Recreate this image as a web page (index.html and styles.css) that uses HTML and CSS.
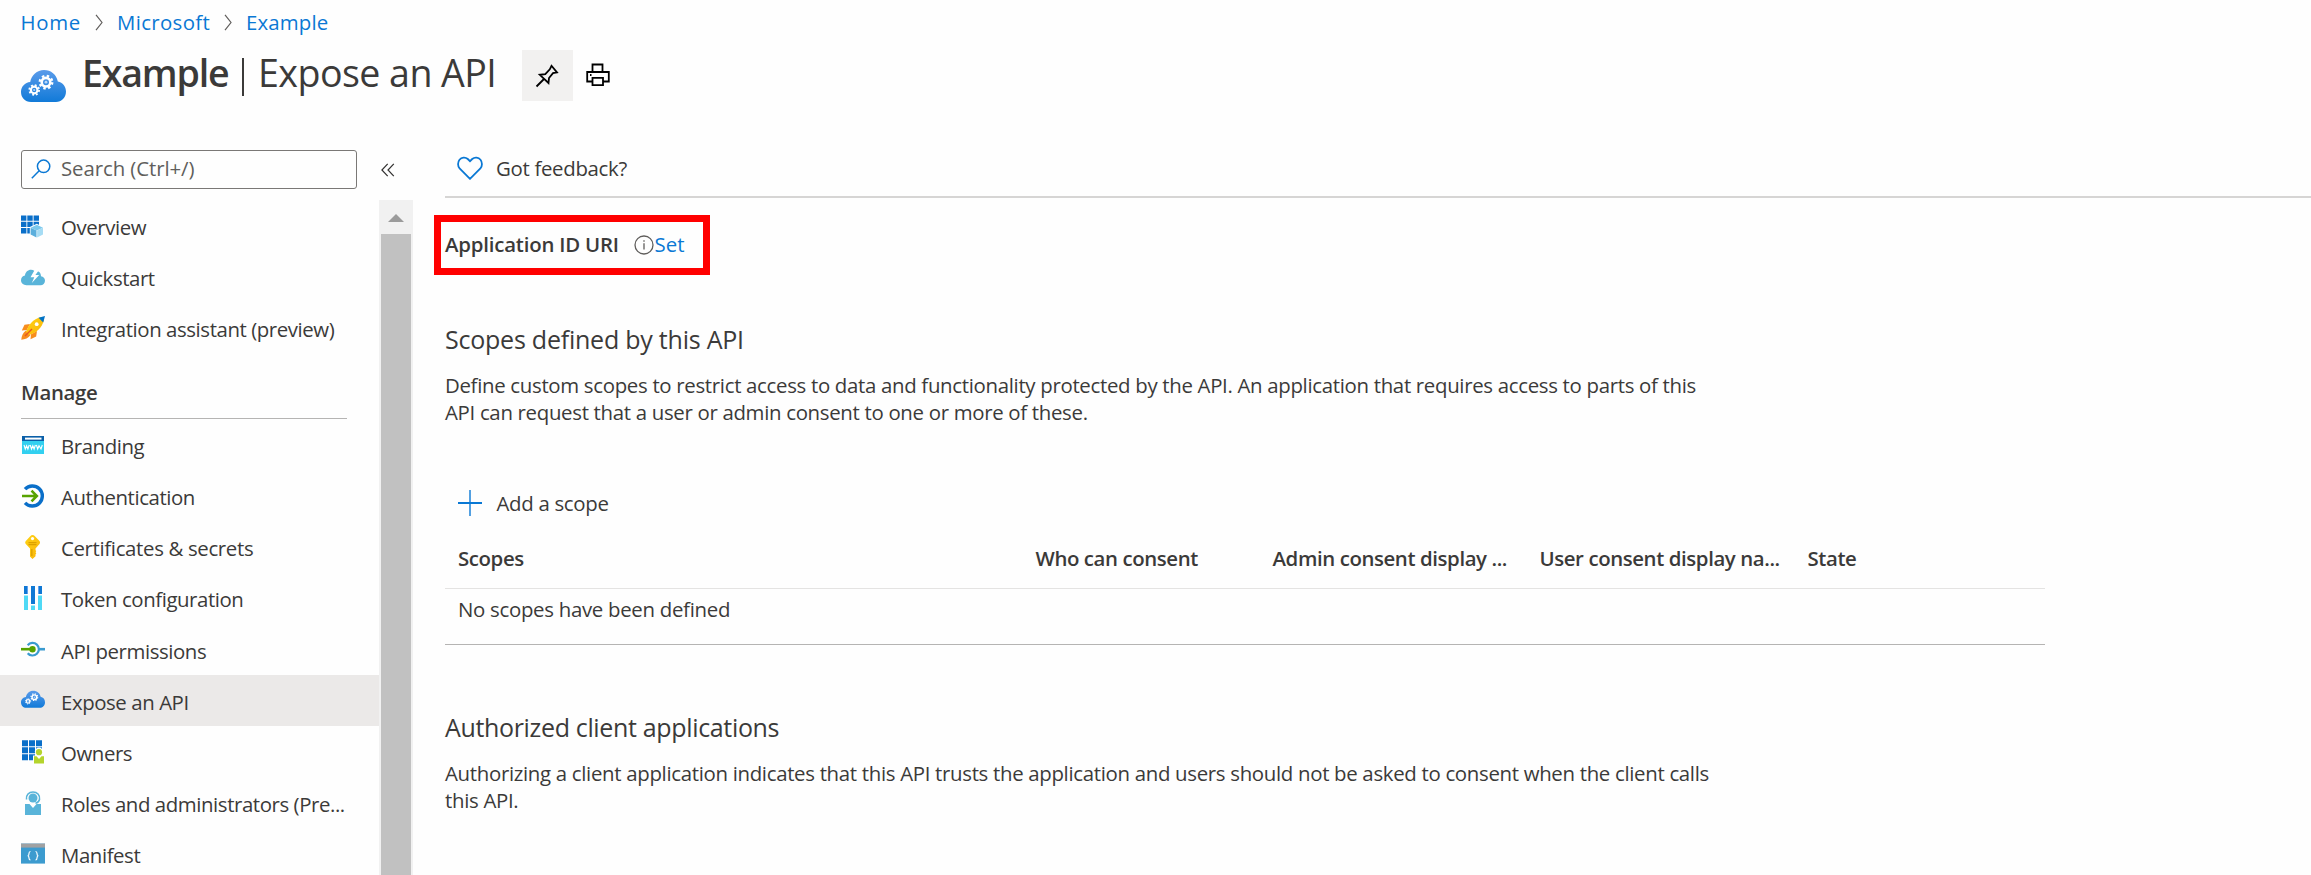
FILE: index.html
```
<!DOCTYPE html>
<html lang="en">
<head>
<meta charset="utf-8">
<title>Example | Expose an API</title>
<link rel="stylesheet" href="styles.css">
</head>
<body>
<svg class="defs" width="0" height="0" aria-hidden="true">
  <defs>
    <linearGradient id="sky" x1="0" y1="0" x2="0" y2="1"><stop offset="0" stop-color="#5a9bea"/><stop offset="1" stop-color="#117ad8"/></linearGradient>
    <linearGradient id="gold" x1="0" y1="0" x2="1" y2="1"><stop offset="0" stop-color="#ffd314"/><stop offset="1" stop-color="#f9b40a"/></linearGradient>
    <symbol id="api-cloud" viewBox="0 0 45 32">
      <path fill="url(#sky)" d="M10 32C4 32 0 27.500 0 22c0-5.500 4-9.500 9.200-10C10.500 5 16 0 23 0c7 0 12.500 4.500 13.800 11.500C41.800 12.500 45 16.500 45 21.500 45 27.500 40.500 32 35 32Z"/>
      <g fill="none" stroke="#fff">
        <circle cx="25" cy="12.200" r="4.300" stroke-width="2.600"/>
        <circle cx="25" cy="12.200" r="6.200" stroke-width="2.400" stroke-dasharray="2.435 2.435"/>
        <circle cx="13.200" cy="20" r="3.300" stroke-width="2.200"/>
        <circle cx="13.200" cy="20" r="4.900" stroke-width="1.800" stroke-dasharray="1.924 1.924"/>
      </g>
      <circle cx="25" cy="12.200" r="1.400" fill="#b9d8f8"/><circle cx="13.200" cy="20" r="1.100" fill="#b9d8f8"/>
    </symbol>
  </defs>
</svg>

<header class="header">
  <nav class="crumbs">
    <a class="crumb crumb-home">Home</a>
    <svg class="chevron" viewBox="0 0 8 17"><path d="M1 .8 7 8.500 1 16.200"/></svg>
    <a class="crumb crumb-org">Microsoft</a>
    <svg class="chevron" viewBox="0 0 8 17"><path d="M1 .8 7 8.500 1 16.200"/></svg>
    <a class="crumb">Example</a>
  </nav>
  <div class="title-row">
    <svg class="title-icon"><use href="#api-cloud"/></svg>
    <h1 class="title"><span class="title-name">Example</span><span class="title-bar"></span><span>Expose an API</span></h1>
    <button class="pin"><svg viewBox="0 0 24 24" width="24" height="24"><path d="M16.500 1.800 22 8.500 18 9.200 14 14 13.500 19 4.800 10.800 10.300 10.200 14.800 5.300ZM9 15 1.500 22.500"/></svg></button>
    <svg class="print" viewBox="0 0 24 24"><path d="M6.500 9V1.500h10V9M6.500 18.500H1.200V9H22.800v9.500H17M6.500 14.800h10.500V22.200H6.500ZM4 12h1.500"/></svg>
  </div>
</header>

<div class="layout">
  <aside class="sidebar">
    <div class="search-row">
      <div class="search"><svg class="lens" viewBox="0 0 20 20"><circle cx="12.600" cy="7.300" r="6.200"/><path d="M8.200 11.800.8 19.200"/></svg><span>Search (Ctrl+/)</span></div>
      <svg class="collapse" viewBox="0 0 14 14"><path d="M6.700.8.9 7l5.800 6.200M12.800.8 7 7l5.800 6.200"/></svg>
    </div>
    <div class="nav-wrap">
      <nav class="nav">
        <a class="item"><svg class="icon" viewBox="0 0 24 24"><path fill="#0a6fc9" d="M0 1.400h5.400v5.400H0zM6.300 1.400h5.400v5.400H6.300zM12.600 1.400H18v5.400h-5.400zM0 7.700h5.400v5.400H0zM6.300 7.700h5.400v5.400H6.300zM12.600 7.700H18v5.400h-5.400zM0 14h5.400v5.400H0zM6.300 14h5.400v5.400H6.300z"/><path fill="#fff" d="m15.800 9.700 7.200 3.500v8L15.800 24l-7-3.200V13z"/><path fill="#7cc8ec" d="m15.800 10.800 6.200 2.900-6.200 2.800-6.200-2.800z"/><path fill="#5aaedc" d="m9.600 13.700 5.900 2.700v7l-5.900-2.900z"/><path fill="#a6dcf4" d="m22 13.700-5.900 2.700v7l5.900-2.900z"/></svg><span>Overview</span></a>
        <a class="item"><svg class="icon" viewBox="0 0 24 24"><path fill="#59b4d9" d="M5.500 20.200C2.300 20.200 0 18 0 15.300c0-2.500 1.700-4.300 4-4.700C4.200 7 7 4.700 10 4.700c1.300 0 2.500.4 3.500 1.200C17 5 20 7.500 20 11.200c2.300.2 4 2 4 4.500 0 2.600-2 4.500-4.500 4.500z"/><path fill="#fff" d="m14.800 3-5.300 9.300h3.800L10.800 18l7.400-8h-3.800L19.500 3z"/></svg><span>Quickstart</span></a>
        <a class="item"><svg class="icon" viewBox="0 0 24 24"><path fill="#f78d1e" d="M9 8 3.500 8.800.8 14.500l5-.5zM16 15l-.8 5.500-5.700 2.700.5-5zM5 14.500l4.500 4.500C7.500 22 4 23.500.3 23.700.5 20 2 16.500 5 14.500z"/><path fill="url(#gold)" d="M5 16C7 9 12 3 20 1l3 3c-2 8-8 13-15 15z"/><path fill="#0072c6" d="M17.500 1.800 24 0l-1.800 6.500z"/><circle cx="15.700" cy="8.200" r="1.900" fill="#fff"/><path stroke="#e8581c" stroke-width="1.500" d="m11 13-7 7"/></svg><span>Integration assistant (preview)</span></a>
        <div class="group">Manage</div>
        <a class="item"><svg class="icon" viewBox="0 0 24 24"><path fill="#32d0f0" d="M1 3h22v18H1z"/><path fill="#0a5fa8" d="M1 3h22v5H1z"/><path fill="#fff" d="M4 4.600h16.500v2H4z"/><path fill="none" stroke="#fff" stroke-width="1.100" d="m3 12 1.300 4 1.300-3.300L6.900 16l1.300-4m1 0 1.300 4 1.300-3.300 1.300 3.300 1.300-4m1 0 1.300 4 1.300-3.300L20 16l1.300-4"/></svg><span>Branding</span></a>
        <a class="item"><svg class="icon" viewBox="0 0 24 24"><path fill="none" stroke="#0a6fc9" stroke-width="3.400" d="M4 5.200a10 10 0 1 1 0 13.600"/><path fill="none" stroke="#57a300" stroke-width="2.600" d="M1 12h14.500M10.500 6.700 15.800 12l-5.300 5.300"/></svg><span>Authentication</span></a>
        <a class="item item-certs"><svg class="icon" viewBox="0 0 24 24"><path fill="url(#gold)" d="M11.500 0c1 0 1.600.4 2.200 1l4.800 5c.7.8.7 2.200 0 3L14.500 13.500v1.700l.8.900-.8 1.200.8 1-.8 1.200v1.800L11.500 24 9 21.500v-8L4.800 9c-.8-.8-.8-2.200 0-3l4.700-5c.6-.6 1.100-1 2-1z"/><circle cx="11.500" cy="3.600" r="1.600" fill="#fff"/><path stroke="#dca100" stroke-width="1.300" d="M7.500 7.700h8M7.500 9.700h8M10.800 14v7"/></svg><span>Certificates &amp; secrets</span></a>
        <a class="item"><svg class="icon" viewBox="0 0 24 24"><path fill="#0f78d4" d="M3 0h3v8H3zM10 0h4v18h-4zM18 0h3v8h-3z"/><path fill="#5ea0ef" d="M6 0h1v8H6zM17 0h1v8h-1z"/><path fill="#4fd9f5" d="M3 9.500h4V24H3zM10 19.500h4V24h-4zM17 9.500h4V24h-4z"/></svg><span>Token configuration</span></a>
        <a class="item"><svg class="icon" viewBox="0 0 24 24"><path fill="none" stroke="#3a9bd0" stroke-width="2.200" d="M6.700 7.200a6.300 6.300 0 1 1 0 8"/><path stroke="#3a9bd0" stroke-width="2.600" d="M18 11.200h6"/><path stroke="#57a300" stroke-width="2.600" d="M0 11.200h10"/><circle cx="11.500" cy="11.200" r="3.200" fill="#57a300"/></svg><span>API permissions</span></a>
        <a class="item item-active"><svg class="icon" viewBox="0 0 24 24"><use href="#api-cloud" x="0" y="1.200" width="24" height="18"/></svg><span>Expose an API</span></a>
        <a class="item"><svg class="icon" viewBox="0 0 24 24"><path fill="#0a6fc9" d="M1 .3h6v6H1zM8 .3h6v6H8zM15 .3h6v6h-6zM1 7.300h6v6H1zM8 7.300h6v6H8zM15 7.300h6v6h-6zM1 14.300h6v6H1zM8 14.300h6v6H8z"/><circle cx="18" cy="11.800" r="4.200" fill="#fff"/><path fill="#fff" d="M12 15.500h11.800V24H12z"/><circle cx="18" cy="12.200" r="3.100" fill="#b4d42c"/><path fill="#b4d42c" d="M13 16.200h2.500L18 19l2.500-2.800H23v7.300H13z"/></svg><span>Owners</span></a>
        <a class="item"><svg class="icon" viewBox="0 0 24 24"><circle cx="12" cy="7" r="4.500" fill="#59b4d9"/><path fill="none" stroke="#59b4d9" stroke-width="1.600" d="M5.500 8.500C4.800 4 8 1 12 1s7.200 3 6.500 7.500c-.5 2-2 3.300-4 3.800"/><path fill="#59b4d9" d="M4 13h4.500l3.500 4 3.500-4H20v11H4z"/></svg><span>Roles and administrators (Pre...</span></a>
        <a class="item"><svg class="icon" viewBox="0 0 24 24"><path fill="#3c9bcf" d="M0 1.600h24v20H0z"/><path fill="#a0a1a2" d="M0 1.600h24v4H0z"/><path fill="none" stroke="#fff" stroke-width="1.200" d="M9.500 9.500c-1.500 0-1.500.8-1.500 2s-.2 2-1.200 2.200C7.800 14 8 14.800 8 16s0 2 1.500 2M14.500 9.500c1.500 0 1.500.8 1.500 2s.2 2 1.200 2.200c-1 .3-1.200 1.100-1.200 2.300s0 2-1.500 2"/></svg><span>Manifest</span></a>
      </nav>
      <div class="scrollbar"><div class="scroll-up"><svg viewBox="0 0 16 8" width="16" height="8"><path fill="#9b9b9b" d="M8 0l8 8H0z"/></svg></div><div class="thumb"></div></div>
    </div>
  </aside>

  <main class="main">
    <div class="toolbar"><svg class="heart" viewBox="0 0 26 24"><path d="M13 22.800 2.600 12.300C.6 10.200.6 6.200 2.500 3.800c2-2.500 5.800-2.900 8.300-.8L13 5.200 15.200 3c2.500-2.100 6.300-1.700 8.300.8 1.900 2.400 1.900 6.400-.1 8.500Z"/></svg><span class="feedback">Got feedback?</span></div>
    <div class="callout">
      <span class="label">Application ID URI</span>
      <svg class="info" viewBox="0 0 20 20"><circle cx="10" cy="10" r="9"/><path d="M10 8.300V14.500M10 5.300v1.500"/></svg>
      <a class="set">Set</a>
    </div>

    <h2 class="heading heading-scopes">Scopes defined by this API</h2>
    <p class="text">Define custom scopes to restrict access to data and functionality protected by the API. An application that requires access to parts of this<br>API can request that a user or admin consent to one or more of these.</p>

    <div class="add"><svg class="plus" viewBox="0 0 24 26"><path d="M12 0v26"/><path class="plus-h" d="M0 13h24"/></svg><span>Add a scope</span></div>
    <div class="table">
      <div class="row row-head"><span>Scopes</span><span>Who can consent</span><span>Admin consent display ...</span><span>User consent display na...</span><span>State</span></div>
      <div class="row row-empty"><span>No scopes have been defined</span></div>
    </div>

    <h2 class="heading heading-clients">Authorized client applications</h2>
    <p class="text">Authorizing a client application indicates that this API trusts the application and users should not be asked to consent when the client calls<br>this API.</p>
  </main>
</div>
</body>
</html>
```
FILE: styles.css
```
* { box-sizing: border-box; }
body {
  margin: 0;
  height: 875px;
  overflow: hidden;
  background: #fefefe;
  color: #3b3a39;
  font: 400 20.4px/27px "Open Sans", "Noto Sans", sans-serif;
  letter-spacing: -0.31px;
  white-space: nowrap;
}
.defs { position: absolute; }
svg { display: block; flex: none; }

.header { height: 101px; }
.crumbs { display: flex; align-items: center; height: 44px; padding-left: 20.5px; color: #0a78d4; line-height: 44px; letter-spacing: 0.15px; }
.crumb { padding-bottom: 1px; }
.crumb-home { width: 74.5px; letter-spacing: 0.7px; }
.crumb-org { width: 107px; letter-spacing: 0.35px; }
.chevron { width: 8px; height: 17px; margin-right: 14px; fill: none; stroke: #605e5c; stroke-width: 1.2; }

.title-row { display: flex; align-items: flex-start; height: 57px; padding-left: 21px; }
.title-icon { width: 45px; height: 32px; margin-top: 26px; }
.title { display: flex; width: 437px; margin: 0 0 0 16px; font-size: 37.6px; font-weight: 400; line-height: 58px; letter-spacing: -0.55px; }
.title-name { width: 159px; font-weight: 600; letter-spacing: -1.2px; }
.title-bar { width: 2px; height: 38px; margin: 14px 14px 0 1px; background: #3b3a39; }
.pin { display: grid; place-items: center; width: 51px; height: 51px; margin: 6px 0 0 3px; padding: 0 2px 0 0; border: 0; background: #f2f1f0; }
.pin svg, .print { fill: none; stroke: #000; stroke-width: 1.8; }
.print { width: 24px; height: 24px; margin: 19px 0 0 13px; }

.layout { display: flex; height: 774px; }
.sidebar { display: flex; flex-direction: column; width: 413px; letter-spacing: -0.42px; }
.search-row { display: flex; align-items: center; height: 99px; padding: 38px 0 0 21px; }
.search { display: flex; align-items: center; width: 336px; height: 39px; margin-top: -1px; padding-left: 9px; border: 1px solid #7a7876; border-radius: 3px; color: #605e5c; letter-spacing: -0.08px; }
.search span { padding-bottom: 1px; }
.lens { width: 20px; height: 20px; margin-right: 10px; fill: none; stroke: #0a78d4; stroke-width: 1.5; }
.collapse { width: 14px; height: 14px; margin: 0 0 0 24px; fill: none; stroke: #323130; stroke-width: 1.2; }
.nav-wrap { display: flex; height: 675px; overflow: hidden; }
.nav { width: 379px; }
.item { display: flex; align-items: center; height: 51.2px; padding-left: 21px; line-height: 40px; }
.item span { padding-top: 2px; }
.item-certs { letter-spacing: -0.34px; }
.item-active { background: #ebe9e8; }
.icon { width: 24px; height: 24px; margin-right: 16px; }
.group { width: 326px; height: 65.6px; margin-left: 21px; padding-top: 12.4px; border-bottom: 1px solid #b5b4b3; font-weight: 600; line-height: 52.2px; letter-spacing: -0.34px; }
.scrollbar { display: flex; flex-direction: column; width: 34px; padding: 0 2px; background: #f1f1f1; }
.scroll-up { display: grid; place-items: center; height: 34px; padding-top: 2px; }
.thumb { flex: 1; background: #c1c1c1; }

.main { flex: 1; padding: 38px 0 0 32px; }
.toolbar { display: flex; align-items: center; height: 59px; padding-left: 12px; border-bottom: 2px solid #d6d5d4; }
.feedback { padding-top: 1px; }
.heart { width: 26px; height: 24px; margin-right: 13px; fill: none; stroke: #0a78d4; stroke-width: 1.8; }
.callout { display: flex; align-items: center; width: 276px; height: 60px; margin: 17px 0 0 -11px; padding: 0 0 1px 4px; border: 7px solid #f00; }
.label { width: 188.5px; font-weight: 600; letter-spacing: -0.2px; }
.info { width: 20px; height: 20px; fill: none; stroke: #605e5c; stroke-width: 1.3; }
.set { margin-left: 1px; color: #0a78d4; letter-spacing: 0; }

.heading { margin: 0; font-size: 25px; font-weight: 400; line-height: 34px; letter-spacing: -0.23px; }
.heading-scopes { margin-top: 47.3px; }
.heading-clients { margin-top: 65.3px; letter-spacing: -0.34px; }
.text { margin: 15.3px 0 0; }
.add { display: flex; align-items: center; height: 40px; margin-top: 57.2px; padding-left: 13px; }
.add span { padding-top: 1px; }
.plus { width: 24px; height: 26px; margin-right: 14.5px; stroke: #0a78d4; stroke-width: 1.4; }
.plus-h { stroke-width: 2; }
.table { width: 1600px; }
.row { display: grid; grid-template-columns: 577.5px 237px 267px 268px 1fr; padding-left: 13px; }
.row-head { padding-top: 6.6px; border-bottom: 1px solid #e4e3e2; font-weight: 600; line-height: 58.6px; letter-spacing: -0.4px; }
.row-empty { padding-bottom: 14.8px; border-bottom: 1px solid #b5b4b3; line-height: 40.2px; letter-spacing: -0.29px; }
```
